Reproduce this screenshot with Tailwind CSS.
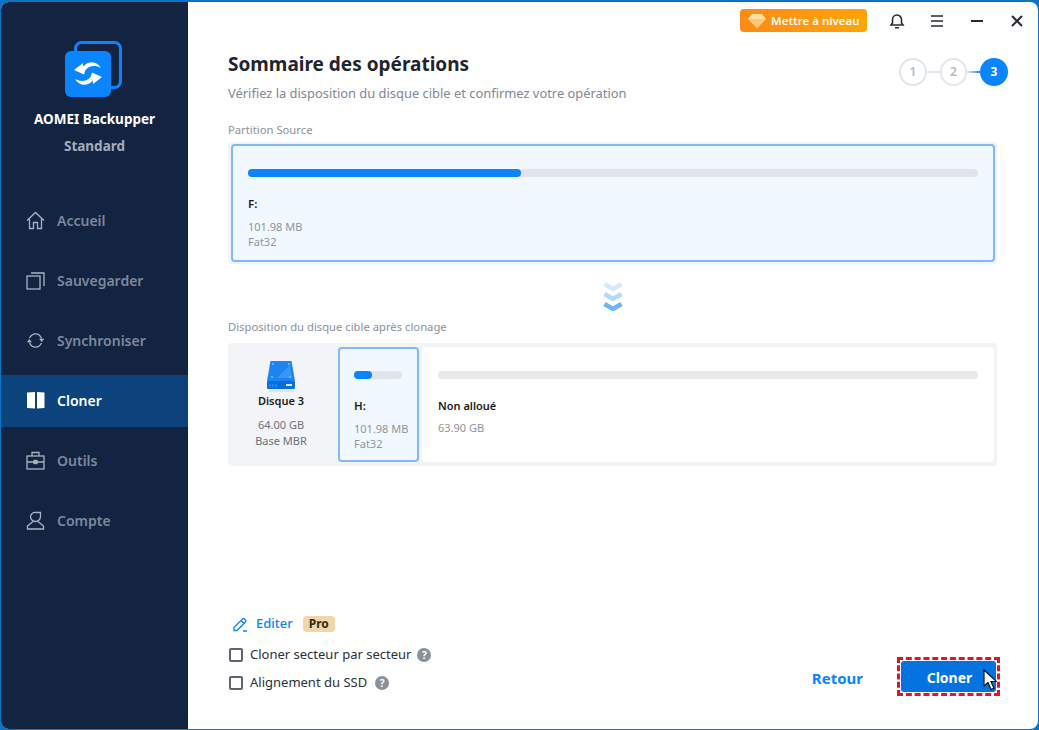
<!DOCTYPE html>
<html lang="fr">
<head>
  <meta charset="UTF-8" />
  <title>AOMEI Backupper</title>
  <script src="https://cdn.jsdelivr.net/npm/@tailwindcss/browser@4"></script>
</head>
<body class="bg-white">
  <div class="w-[1039px] h-[730px] overflow-hidden bg-[#0a74c6] pt-[2px] pb-px pl-px pr-px font-['Noto_Sans','Open_Sans',sans-serif]">
    <div class="flex h-full rounded-[8px] overflow-hidden bg-white">

      <!-- sidebar -->
      <aside class="w-[187px] shrink-0 bg-[#132442] flex flex-col">
        <div class="pt-[39px] flex flex-col items-center shrink-0">
          <svg class="w-[58px] h-[58px] shrink-0 ml-[-1px]" viewBox="0 0 58 58">
            <rect x="10.500" y="1.500" width="45" height="45" rx="6" fill="none" stroke="#0a84ff" stroke-width="3"/>
            <rect x="0" y="10" width="46" height="46" rx="6" fill="#0a84ff"/>
            <g fill="#fff">
              <path d="M9 29 18 22V25.500C24 19 32 20 36 27 30 24 24.500 24.500 20.500 29L19 33.500Z"/>
              <path d="M9 29 18 22V25.500C24 19 32 20 36 27 30 24 24.500 24.500 20.500 29L19 33.500Z" transform="rotate(180 23 32.500)"/>
            </g>
          </svg>
          <div class="mt-[10px] text-[13.500px] leading-[20px] font-bold text-white">AOMEI Backupper</div>
          <div class="mt-[7px] text-[13.500px] leading-[20px] font-bold text-[#a4adbb]">Standard</div>
        </div>
        <nav class="flex flex-col gap-2 mt-[39px]">
          <a class="h-[52px] flex items-center pl-[25px] pb-[2px] gap-[12px] text-[14px] font-semibold text-[#7d889b]">
            <svg class="w-[19px] h-[19px] shrink-0" viewBox="0 0 19 19" fill="none" stroke="#aab2c0" stroke-width="1.300"><path d="M1 9.500 9.500 1.500 18 9.500M3.500 8v9.500h4v-6h4v6h4V8"/></svg>
            <span>Accueil</span>
          </a>
          <a class="h-[52px] flex items-center pl-[25px] pb-[2px] gap-[12px] text-[14px] font-semibold text-[#7d889b]">
            <svg class="w-[19px] h-[19px] shrink-0" viewBox="0 0 19 19" fill="none" stroke="#aab2c0" stroke-width="1.300"><rect x="1" y="5" width="13" height="13"/><path d="M5 2h13v13"/></svg>
            <span>Sauvegarder</span>
          </a>
          <a class="h-[52px] flex items-center pl-[25px] pb-[2px] gap-[12px] text-[14px] font-semibold text-[#7d889b]">
            <svg class="w-[19px] h-[19px] shrink-0" viewBox="0 0 19 19" fill="none" stroke="#aab2c0" stroke-width="1.300"><path d="M3.500 7C5 4 7 2.800 9.500 2.800c2.800 0 5 1.700 6 4.700M15.500 12C14 15 12 16.200 9.500 16.200c-2.800 0-5-1.700-6-4.700"/><path d="M13 7.800h5.200L15.800 11zM6 11.200H.8L3.200 8z" fill="#aab2c0" stroke="none"/></svg>
            <span>Synchroniser</span>
          </a>
          <a class="h-[52px] flex items-center pl-[25px] pb-[2px] gap-[12px] text-[14px] font-semibold text-white bg-[#0c437d]">
            <svg class="w-[19px] h-[19px] shrink-0" viewBox="0 0 19 19" fill="#fff"><path d="M1 1.500 9 1v16.500L1 17zM11 1l7.500.500V17L11 17.500z"/></svg>
            <span>Cloner</span>
          </a>
          <a class="h-[52px] flex items-center pl-[25px] pb-[2px] gap-[12px] text-[14px] font-semibold text-[#7d889b]">
            <svg class="w-[19px] h-[19px] shrink-0" viewBox="0 0 19 19" fill="none" stroke="#aab2c0" stroke-width="1.300"><rect x="1" y="5" width="17" height="13"/><path d="M6 5V1.500h7V5M1 11h17"/><rect x="8" y="9.500" width="3" height="3" fill="#aab2c0"/></svg>
            <span>Outils</span>
          </a>
          <a class="h-[52px] flex items-center pl-[25px] pb-[2px] gap-[12px] text-[14px] font-semibold text-[#7d889b]">
            <svg class="w-[19px] h-[19px] shrink-0" viewBox="0 0 19 19" fill="none" stroke="#aab2c0" stroke-width="1.300"><path d="M9.500 1.500h5v4a5 5 0 0 1-10 0 4.500 4.500 0 0 1 5-4zM7 10.500 1.500 15v3h16v-3L12 10.500"/></svg>
            <span>Compte</span>
          </a>
        </nav>
      </aside>

      <!-- main -->
      <main class="flex-1 flex flex-col min-w-0 relative">
        <!-- title bar -->
        <div class="h-[36px] shrink-0 flex items-start justify-end pt-[7px]">
          <div class="flex items-center h-[23px] w-[127px] rounded-[4px] bg-gradient-to-r from-[#fb8b17] to-[#ffa406] pl-2 gap-[5px] text-white text-[11.500px] font-semibold">
            <svg class="w-[18px] h-[14px] shrink-0" viewBox="0 0 18 14"><path d="M4 0h10l4 5-9 9-9-9z" fill="#ffe1a6"/><path d="M0 5h18l-9 9z" fill="#ffc873"/></svg>
            <span class="whitespace-nowrap">Mettre à niveau</span>
          </div>
          <div class="flex items-center h-[23px] ml-[22px] mr-[14px] gap-[24px]">
            <svg class="w-[16px] h-[16px] mr-px" viewBox="0 0 16 16" fill="none" stroke="#2a2a35" stroke-width="1.600"><path d="M2 12h12l-1.500-2V6.500a4.500 4.500 0 0 0-9 0V10zM6 14.800h4"/></svg>
            <svg class="w-[14px] h-[14px]" viewBox="0 0 14 14" stroke="#2a2a35" stroke-width="1.600"><path d="M1 2h12M1 7h12M1 12h12"/></svg>
            <svg class="w-[14px] h-[14px] ml-[2px]" viewBox="0 0 14 14" stroke="#2a2a35" stroke-width="1.800"><path d="M1 7h12"/></svg>
            <svg class="w-[14px] h-[14px] ml-[2px]" viewBox="0 0 14 14" stroke="#2a2a35" stroke-width="2"><path d="M2 2l10 10M12 2 2 12"/></svg>
          </div>
        </div>

        <!-- heading + steps -->
        <div class="flex justify-between pl-[40px] pr-[30px] h-[84px] shrink-0">
          <div>
            <h1 class="mt-[12px] text-[19px] leading-[28px] font-bold text-[#1f2430]">Sommaire des opérations</h1>
            <p class="mt-[6px] text-[12.900px] leading-[18px] text-[#7f8794]">Vérifiez la disposition du disque cible et confirmez votre opération</p>
          </div>
          <div class="flex items-center h-[28px] mt-[20px] text-[12px] font-semibold">
            <span class="w-[28px] h-[28px] rounded-full border-2 border-[#e1e5ec] text-[#b4b8bf] flex items-center justify-center">1</span>
            <span class="w-[13px] h-[2px] bg-[#e1e5ec]"></span>
            <span class="w-[27px] h-[28px] rounded-full border-2 border-[#e1e5ec] text-[#b4b8bf] flex items-center justify-center">2</span>
            <span class="w-[13px] h-[2px] bg-gradient-to-r from-[#e1e5ec] to-[#0a84ff]"></span>
            <span class="w-[28px] h-[28px] rounded-full bg-[#0a84ff] text-white font-bold flex items-center justify-center">3</span>
          </div>
        </div>

        <div class="pl-[40px] pr-[41px]">
          <div class="text-[11.250px] leading-[16px] text-[#8b919c]">Partition Source</div>

          <!-- source partition -->
          <div class="mt-[4px] p-[2px] bg-[#f2f3f6] rounded-[4px]">
            <div class="ml-px h-[118px] rounded-[4px] border-2 border-[#80b9fb] bg-[#f2f8ff] px-[15px] pt-[23px]">
              <div class="h-2 rounded-full bg-[#e1e4eb]">
                <div class="h-2 w-[273px] rounded-full bg-[#0a84ff]"></div>
              </div>
              <div class="mt-[19px] text-[11.500px] leading-[16px] font-semibold text-[#1a1a1a]">F:</div>
              <div class="mt-[7px] text-[11px] leading-[15px] text-[#8f949c]">101.98 MB</div>
              <div class="text-[11px] leading-[15px] text-[#8f949c]">Fat32</div>
            </div>
          </div>

          <!-- arrows -->
          <div class="flex justify-center h-[57px] items-center pt-[7px]">
            <svg class="w-[20px] h-[30px] shrink-0" viewBox="0 0 20 30" fill="none" stroke-width="4.500">
              <path d="M1.500 3l8.500 5 8.500-5" stroke="#d5e8fd"/>
              <path d="M1.500 13l8.500 5 8.500-5" stroke="#b5d8fd"/>
              <path d="M1.500 23l8.500 5 8.500-5" stroke="#6cb4fb"/>
            </svg>
          </div>

          <div class="text-[11.250px] leading-[16px] text-[#8b919c] -mt-[2px]">Disposition du disque cible après clonage</div>

          <!-- target disk -->
          <div class="mt-[8px] h-[123px] bg-[#f3f4f7] rounded-[4px] flex pt-[4px] pb-[4px] pr-[3px]">
            <div class="w-[110px] shrink-0 flex flex-col items-center pt-[13px] pr-[4px]">
              <svg class="w-[30px] h-[32px] shrink-0" viewBox="0 0 30 32">
                <path d="M4.500 1h21L29 21H1z" fill="#1b84f0"/>
                <path d="M11 18 24 5 26 18z" fill="#3a95f4"/>
                <g fill="#7fbcfa"><circle cx="7" cy="4" r="1"/><circle cx="23" cy="4" r="1"/><circle cx="6" cy="17" r="1"/><circle cx="24" cy="17" r="1"/></g>
                <rect x="1" y="21" width="28" height="8" rx="1" fill="#0a6fdc"/>
                <rect x="20" y="24" width="6" height="2" fill="#d6eaff"/>
                <path d="M4 24v3M7 24v3M10 24v3" stroke="#3a95f4"/>
                <rect x="3" y="29" width="24" height="3" fill="#dfe7f2"/>
              </svg>
              <div class="mt-[1px] text-[11px] leading-[16px] font-semibold text-[#1a1a1a]">Disque 3</div>
              <div class="mt-[8px] text-[11px] leading-[16px] text-[#6c717a]">64.00 GB</div>
              <div class="text-[11px] leading-[16px] text-[#6c717a]">Base MBR</div>
            </div>
            <div class="w-[81px] shrink-0 rounded-[4px] border-2 border-[#80b9fb] bg-[#f2f8ff] pl-[14px] pr-[15px] pt-[22px]">
              <div class="h-2 rounded-full bg-[#e1e4eb]">
                <div class="h-2 w-[18px] rounded-full bg-[#0a84ff]"></div>
              </div>
              <div class="mt-[19px] text-[11.500px] leading-[16px] font-semibold text-[#1a1a1a]">H:</div>
              <div class="mt-[7px] text-[11px] leading-[15px] text-[#8f949c] whitespace-nowrap">101.98 MB</div>
              <div class="text-[11px] leading-[15px] text-[#8f949c]">Fat32</div>
            </div>
            <div class="flex-1 ml-[3px] rounded-[4px] bg-white pl-[16px] pr-[16px] pt-[24px]">
              <div class="h-2 rounded-full bg-[#e8e9eb]"></div>
              <div class="mt-[19px] text-[11px] leading-[16px] font-semibold text-[#1a1a1a]">Non alloué</div>
              <div class="mt-[6px] text-[11px] leading-[16px] text-[#8f949c]">63.90 GB</div>
            </div>
          </div>
        </div>

        <!-- bottom -->
        <div class="mt-auto flex justify-between items-end pl-[40px] pr-[38px] pb-[32px]">
          <div>
            <div class="flex items-center h-[22px] pl-[5px]">
              <svg class="w-[15px] h-[15px]" viewBox="0 0 15 15" fill="none" stroke="#0a84ff" stroke-width="1.300"><path d="M1 13.500V10.500L9.500 2a1.500 1.500 0 0 1 2 0l1 1a1.500 1.500 0 0 1 0 2L4 13.500zM8 3.500l3.500 3.500M10 14h4"/></svg>
              <span class="ml-[8px] text-[13px] font-medium text-[#0a84ff]">Editer</span>
              <span class="ml-[10px] px-[6px] h-[16px] rounded-[4px] bg-[#f1d6a8] text-[12px] leading-[16px] font-bold text-[#33291c]">Pro</span>
            </div>
            <label class="flex items-center h-[28px] mt-[6px] pl-px">
              <span class="w-[14px] h-[14px] rounded-[2px] border-2 border-[#5f6470] bg-white"></span>
              <span class="ml-[7px] text-[13px] text-[#2c3038]">Cloner secteur par secteur</span>
              <span class="ml-[6px] w-[14px] h-[14px] rounded-full bg-[#8a909c] text-white text-[10px] font-bold flex items-center justify-center">?</span>
            </label>
            <label class="flex items-center h-[28px] pl-px">
              <span class="w-[14px] h-[14px] rounded-[2px] border-2 border-[#5f6470] bg-white"></span>
              <span class="ml-[7px] text-[13px] text-[#2c3038]">Alignement du SSD</span>
              <span class="ml-[8px] w-[14px] h-[14px] rounded-full bg-[#8a909c] text-white text-[10px] font-bold flex items-center justify-center">?</span>
            </label>
          </div>
          <div class="flex items-center mb-px">
            <button class="text-[15px] font-bold text-[#0a84ff] mr-[34px] mt-[3px]">Retour</button>
            <div class="relative w-[103px] h-[39px] border-[3px] border-dashed border-[#e8112d] p-px">
              <button class="w-full h-full rounded-[3px] bg-[#0473e0] text-white text-[14px] font-bold pl-[2px] pt-[2px]">Cloner</button>
              <svg class="absolute left-[83px] top-[9px] w-[14px] h-[22px]" viewBox="0 0 14 22"><path d="M1 1v16l4-3.500 3 7 3-1.300-3-6.700h5.500z" fill="#fff" stroke="#111" stroke-width="1.200"/></svg>
            </div>
          </div>
        </div>
      </main>
    </div>
  </div>
</body>
</html>
